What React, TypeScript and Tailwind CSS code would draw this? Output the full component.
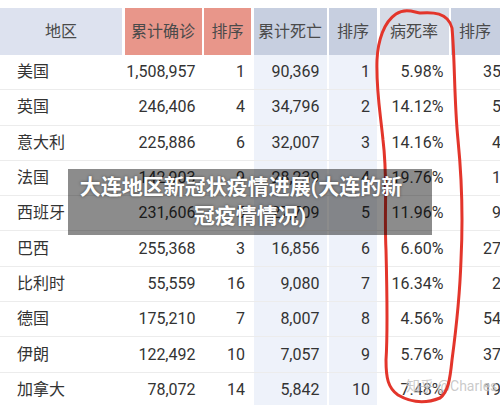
const font = { fontFamily: "Roboto, 'Noto Sans CJK SC', sans-serif" };

const rows = [
  ["美国", "1,508,957", "1", "90,369", "1", "5.98%", "35"],
  ["英国", "246,406", "4", "34,796", "2", "14.12%", "5"],
  ["意大利", "225,886", "6", "32,007", "3", "14.16%", "4"],
  ["法国", "142,903", "9", "28,239", "4", "19.76%", "1"],
  ["西班牙", "231,606", "5", "27,709", "5", "11.96%", "9"],
  ["巴西", "255,368", "3", "16,856", "6", "6.60%", "27"],
  ["比利时", "55,559", "16", "9,080", "7", "16.34%", "2"],
  ["德国", "175,210", "7", "8,007", "8", "4.56%", "54"],
  ["伊朗", "122,492", "10", "7,057", "9", "5.76%", "37"],
  ["加拿大", "78,072", "14", "5,842", "10", "7.48%", "19"],
];

const grid = "grid grid-cols-[122px_77px_47px_73px_48px_69px_52px] gap-x-[2.5px]";

const Header = () => (
  <div className={`${grid} h-[47px] text-[16px] text-[#4a4a4a]`}>
    <div className="bg-[#dde2ef] flex items-center justify-center">地区</div>
    <div className="bg-[#e8968a] flex items-center justify-center">累计确诊</div>
    <div className="bg-[#e8968a] flex items-center justify-center">排序</div>
    <div className="bg-[#c7cfe0] flex items-center justify-center">累计死亡</div>
    <div className="bg-[#c7cfe0] flex items-center justify-center">排序</div>
    <div className="bg-[#d6dbe6] flex items-center justify-center">病死率</div>
    <div className="bg-[#c7cfe0] flex items-center justify-center pr-[4px]">排序</div>
  </div>
);

const Row = ({ r }: { r: string[] }) => (
  <div className={`${grid} h-[35.3px] border-b border-[#ececec] text-[16px] text-[#333]`}>
    <div className="flex items-center pl-[17px]">{r[0]}</div>
    <div className="flex items-center justify-end pr-[6px]">{r[1]}</div>
    <div className="flex items-center justify-end pr-[6px]">{r[2]}</div>
    <div className="flex items-center justify-end pr-[7px] bg-[#eef2fa]">{r[3]}</div>
    <div className="flex items-center justify-end pr-[7px] bg-[#eef2fa]">{r[4]}</div>
    <div className="flex items-center justify-end pr-[5px]">{r[5]}</div>
    <div className="flex items-center justify-end pr-[2px]">{r[6]}</div>
  </div>
);

export default function App() {
  return (
    <div className="relative w-[500px] h-[405px] overflow-hidden bg-white" style={font}>
      <div className="pt-[8px]">
        <Header />
        {rows.map((r) => (
          <Row key={r[0]} r={r} />
        ))}
      </div>

      <div className="absolute left-[406px] top-[376px] whitespace-nowrap text-[14px] text-[#bdbdbd]/80 [text-shadow:0_0_2px_#fff]">
        知乎 @Charles
      </div>

      <svg className="absolute inset-0" width="500" height="405" viewBox="0 0 500 405" fill="none">
        <path
          d="M396 14 C405 8 414 12 420 13 C432 12 448 12 452 28 C455 60 454 100 458 140 C462 180 463 220 461 260 C460 290 456 330 452 360 C450 380 448 392 440 398 C425 404 410 402 398 395 C388 388 386 378 386 360 C388 330 387 290 386 250 C384 210 388 180 383 140 C380 110 376 90 377 60 C378 40 384 22 396 14 Z"
          stroke="#e3352b"
          strokeWidth="3"
          strokeLinejoin="round"
        />
      </svg>

      <div className="absolute left-[68px] top-[169px] w-[364px] h-[66px] bg-black/45 flex flex-col items-center justify-center">
        <div className="text-white font-bold text-[21px] leading-[29px] text-center whitespace-nowrap [text-shadow:0_0_3px_rgba(0,0,0,0.5)]">
          <div className="mr-[18px]">大连地区新冠状疫情进展(大连的新</div>
          <div>冠疫情情况)</div>
        </div>
      </div>
    </div>
  );
}
